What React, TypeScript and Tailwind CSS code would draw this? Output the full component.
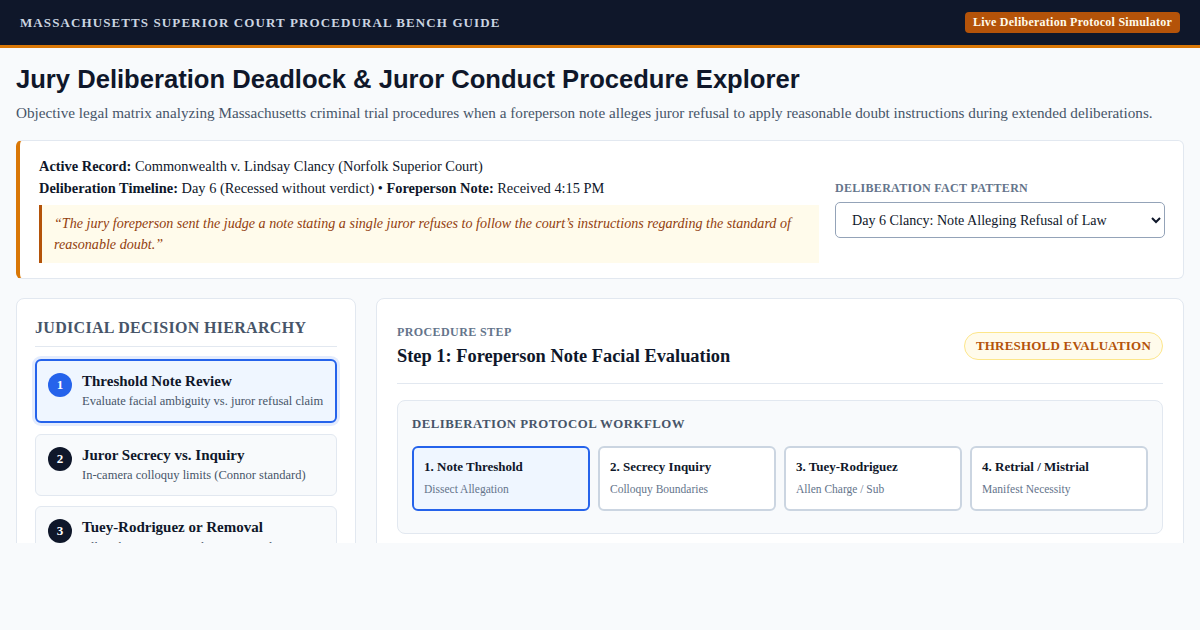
import React from "react";

const serif = "font-['Liberation_Serif','Times_New_Roman',serif]";

const items = [
  { n: 1, title: "Threshold Note Review", desc: "Evaluate facial ambiguity vs. juror refusal claim", active: true },
  { n: 2, title: "Juror Secrecy vs. Inquiry", desc: "In-camera colloquy limits (Connor standard)", active: false },
  { n: 3, title: "Tuey-Rodriguez or Removal", desc: "Allen charge or juror substitution analysis", active: false },
];

const steps = [
  { title: "1. Note Threshold", desc: "Dissect Allegation", active: true },
  { title: "2. Secrecy Inquiry", desc: "Colloquy Boundaries", active: false },
  { title: "3. Tuey-Rodriguez", desc: "Allen Charge / Sub", active: false },
  { title: "4. Retrial / Mistrial", desc: "Manifest Necessity", active: false },
];

export default function App() {
  return (
    <div className={`min-h-[630px] w-[1200px] bg-[#f8fafc] ${serif} text-[#0f172a]`}>
      <div className="h-[543px] overflow-hidden">
        <header className="flex h-[48px] items-center justify-between border-b-[3px] border-[#d97706] bg-[#0f172a] px-5">
          <div className="text-[13px] font-bold uppercase tracking-[1.1px] text-[#cbd5e1]">
            Massachusetts Superior Court Procedural Bench Guide
          </div>
          <div className="rounded-[4px] bg-[#b45309] px-2 py-[3px] text-[12px] font-bold leading-[15px] tracking-[0.25px] text-[#fffbeb]">
            Live Deliberation Protocol Simulator
          </div>
        </header>

        <main className="px-4 pt-4">
          <h1 className="font-['Liberation_Sans',Arial,sans-serif] text-[25.6px] font-bold leading-[31px] text-[#0f172a]">
            Jury Deliberation Deadlock &amp; Juror Conduct Procedure Explorer
          </h1>
          <p className="mt-[6px] text-[15.2px] leading-[23px] text-[#475569]">
            Objective legal matrix analyzing Massachusetts criminal trial procedures when a foreperson note alleges juror refusal to apply reasonable doubt instructions during extended deliberations.
          </p>

          <section className="mt-[16px] flex items-center gap-4 rounded-md border border-l-4 border-[#e2e8f0] border-l-[#d97706] bg-white pt-[14px] pb-[15px] pl-[19px] pr-[18px]">
            <div className="flex-1 text-[14.4px] leading-[22px]">
              <div>
                <span className="font-bold">Active Record:</span> Commonwealth v. Lindsay Clancy (Norfolk Superior Court)
              </div>
              <div>
                <span className="font-bold">Deliberation Timeline:</span> Day 6 (Recessed without verdict) •{" "}
                <span className="font-bold">Foreperson Note:</span> Received 4:15 PM
              </div>
              <blockquote className="mt-[6px] border-l-[3px] border-[#b45309] bg-[#fffbeb] px-3 py-2 text-[14.1px] italic leading-[21px] text-[#92400e]">
                “The jury foreperson sent the judge a note stating a single juror refuses to follow the court’s instructions regarding the standard of reasonable doubt.”
              </blockquote>
            </div>
            <div className="w-[330px]">
              <label className="mb-[6px] block text-[12px] font-bold uppercase leading-[16px] tracking-[0.3px] text-[#64748b]">
                Deliberation Fact Pattern
              </label>
              <select className="h-9 w-full rounded-[5px] border border-[#94a3b8] bg-white pl-3 pr-2 text-[14.1px] text-[#0f172a]">
                <option>Day 6 Clancy: Note Alleging Refusal of Law</option>
              </select>
            </div>
          </section>

          <div className="mt-[19px] flex gap-5">
            <aside className="w-[340px] shrink-0 rounded-lg border border-[#e2e8f0] bg-white p-[18px]">
              <h2 className="border-b border-[#e2e8f0] pb-[7px] text-[16px] font-bold uppercase leading-[22px] tracking-[0.3px] text-[#475569]">
                Judicial Decision Hierarchy
              </h2>
              <div className="mt-3 flex flex-col gap-[10.5px]">
                {items.map((it) => (
                  <div
                    key={it.n}
                    className={
                      it.active
                        ? "flex items-start gap-[10px] rounded-md border-2 border-[#2563eb] bg-[#eff6ff] px-[11px] py-3 shadow-[0_0_0_3px_rgba(37,99,235,0.12)]"
                        : "flex items-start gap-[10px] rounded-md border border-[#e2e8f0] bg-[#f8fafc] p-3"
                    }
                  >
                    <div
                      className={`flex h-6 w-6 shrink-0 items-center justify-center rounded-full text-[13px] font-bold text-white ${
                        it.active ? "bg-[#2563eb]" : "bg-[#0f172a]"
                      }`}
                    >
                      {it.n}
                    </div>
                    <div>
                      <div className="text-[15px] font-bold leading-4 text-[#0f172a]">{it.title}</div>
                      <div className="mt-1 text-[12.5px] leading-4 text-[#475569]">{it.desc}</div>
                    </div>
                  </div>
                ))}
              </div>
            </aside>

            <section className="flex-1 rounded-lg border border-[#e2e8f0] bg-white px-5 pt-6 pb-5">
              <div className="flex items-center justify-between border-b border-[#e2e8f0] pb-[14px]">
                <div>
                  <div className="text-[12px] font-bold uppercase leading-[18px] tracking-[0.4px] text-[#64748b]">
                    Procedure Step
                  </div>
                  <div className="mt-[2px] text-[18.4px] font-bold leading-[26px] text-[#0f172a]">
                    Step 1: Foreperson Note Facial Evaluation
                  </div>
                </div>
                <div className="flex h-7 items-center rounded-full border border-[#fde68a] bg-[#fffbeb] px-[11px] text-[13px] font-bold uppercase tracking-[0.2px] text-[#b45309]">
                  Threshold Evaluation
                </div>
              </div>

              <div className="mt-4 rounded-lg border border-[#e2e8f0] bg-[#f8fafc] px-[14px] pt-[14px] pb-[22px]">
                <div className="text-[12.8px] font-bold uppercase leading-[18px] tracking-[0.5px] text-[#475569]">
                  Deliberation Protocol Workflow
                </div>
                <div className="mt-[13px] grid grid-cols-4 gap-2">
                  {steps.map((s) => (
                    <div
                      key={s.title}
                      className={`rounded-md border-2 px-[10px] pt-[10px] pb-3 ${
                        s.active ? "border-[#2563eb] bg-[#eff6ff]" : "border-[#cbd5e1] bg-white"
                      }`}
                    >
                      <div className="text-[13px] font-bold leading-[18px] text-[#0f172a]">{s.title}</div>
                      <div className="mt-[5px] text-[11.5px] leading-4 text-[#64748b]">{s.desc}</div>
                    </div>
                  ))}
                </div>
              </div>
            </section>
          </div>
        </main>
      </div>
    </div>
  );
}
